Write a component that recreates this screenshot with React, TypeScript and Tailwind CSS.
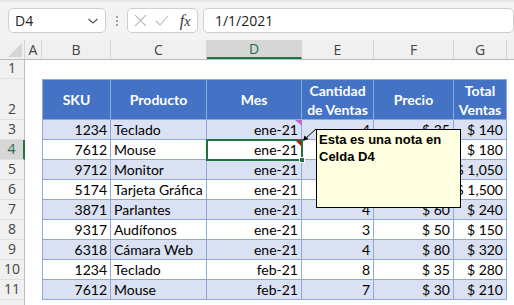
import React from 'react';

const cols = [
  { key: 'A', w: 'w-[17px]' },
  { key: 'B', w: 'w-[69px]' },
  { key: 'C', w: 'w-[96px]' },
  { key: 'D', w: 'w-[95px]' },
  { key: 'E', w: 'w-[72px]' },
  { key: 'F', w: 'w-[80px]' },
  { key: 'G', w: 'w-[53px]' },
];

// E/F of rows 4-6 sit fully under the note, so they're left blank
const data: [string, string, string, string, string, string][] = [
  ['1234', 'Teclado', 'ene-21', '4', '$ 35', '$ 140'],
  ['7612', 'Mouse', 'ene-21', '', '', '$ 180'],
  ['9712', 'Monitor', 'ene-21', '', '', '$ 1,050'],
  ['5174', 'Tarjeta Gráfica', 'ene-21', '', '', '$ 1,500'],
  ['3871', 'Parlantes', 'ene-21', '4', '$ 60', '$ 240'],
  ['9317', 'Audífonos', 'ene-21', '3', '$ 50', '$ 150'],
  ['6318', 'Cámara Web', 'ene-21', '4', '$ 80', '$ 320'],
  ['1234', 'Teclado', 'feb-21', '8', '$ 35', '$ 280'],
  ['7612', 'Mouse', 'feb-21', '7', '$ 30', '$ 210'],
];

const font = { fontFamily: 'Lato, "Liberation Sans", sans-serif' };

function RowHead({ n, h, active }: { n: string; h: string; active?: boolean }) {
  return (
    <div
      className={`${h} w-[25px] shrink-0 flex items-end justify-center pb-[1px] text-[14px] leading-[18px] border-b border-[#e1e1e1] ${
        active ? 'bg-[#d6d6d6] text-[#217346] border-r-2 border-r-[#217346]' : 'bg-[#f0f0f0] text-[#444] border-r border-r-[#bdbdbd]'
      }`}
      style={{ fontFamily: '"Open Sans", sans-serif' }}
    >
      {n}
    </div>
  );
}

export default function App() {
  return (
    <div className="relative w-[514px] h-[305px] overflow-hidden bg-white text-black" style={font}>
      {/* formula bar */}
      <div className="h-[40px] bg-[#f3f3f3] border-t-2 border-[#e6e6e6] flex items-start pt-[6px]">
        <div className="ml-[8px] w-[101px] h-[25px] bg-white border border-[#cfcfcf] rounded-[5px] flex items-center justify-between pl-[6px] pr-[6px] text-[14px] text-[#222]" style={{ fontFamily: '"Open Sans", sans-serif' }}>
          <span>D4</span>
          <svg width="12" height="8" viewBox="0 0 12 8"><path d="M1.5 2 L6 6 L10.5 2" fill="none" stroke="#555" strokeWidth="1.2" /></svg>
        </div>
        <div className="w-[21px] h-[25px] flex flex-col items-center justify-center gap-[2px]">
          <span className="w-[2px] h-[2px] bg-[#888] rounded-full" />
          <span className="w-[2px] h-[2px] bg-[#888] rounded-full" />
          <span className="w-[2px] h-[2px] bg-[#888] rounded-full" />
        </div>
        <div className="w-[73px] h-[25px] bg-white border border-[#cfcfcf] rounded-[5px] flex items-center pl-[6px] gap-[8px]">
          <svg width="13" height="13" viewBox="0 0 13 13"><path d="M1 1 L12 12 M12 1 L1 12" stroke="#bdbdbd" strokeWidth="1.1" /></svg>
          <svg width="14" height="12" viewBox="0 0 14 12"><path d="M1 6 L5 10 L13 1" fill="none" stroke="#bdbdbd" strokeWidth="1.1" /></svg>
          <span className="text-[16px] italic text-[#333] ml-[3px] leading-none" style={{ fontFamily: '"Liberation Serif", serif' }}>
            f<span className="text-[14px]">x</span>
          </span>
        </div>
        <div className="ml-[5px] w-[320px] h-[25px] bg-white border border-[#cfcfcf] rounded-[5px] flex items-center pl-[11px] text-[14px] text-[#222]" style={{ fontFamily: '"Open Sans", sans-serif' }}>
          1/1/2021
        </div>
      </div>

      {/* column headers */}
      <div className="h-[20px] flex bg-[#f0f0f0] border-b border-[#bababa] text-[14px] text-[#444]" style={{ fontFamily: '"Open Sans", sans-serif' }}>
        <div className="w-[25px] shrink-0 border-r border-[#d4d4d4] flex items-end justify-end pr-[2px] pb-[2px]">
          <svg width="14" height="14" viewBox="0 0 14 14"><path d="M14 0 L14 14 L0 14 Z" fill="#d6d6d6" /></svg>
        </div>
        {cols.map(c => (
          <div
            key={c.key}
            className={`${c.w} shrink-0 flex items-center justify-center border-r border-[#d4d4d4] ${
              c.key === 'D' ? 'bg-[#d6d6d6] text-[#217346] border-b-2 border-b-[#217346]' : ''
            }`}
          >
            {c.key}
          </div>
        ))}
        <div className="flex-1" />
      </div>

      {/* row 1 */}
      <div className="flex">
        <RowHead n="1" h="h-[19px]" />
      </div>

      {/* row 2: table header */}
      <div className="flex">
        <RowHead n="2" h="h-[41px]" />
        <div className="w-[17px] shrink-0" />
        {['SKU', 'Producto', 'Mes', 'Cantidad de Ventas', 'Precio', 'Total Ventas'].map((t, i) => (
          <div
            key={t}
            className={`${cols[i + 1].w} shrink-0 h-[41px] bg-[#4472c4] text-white font-bold text-[14px] leading-[19px] text-center flex items-center justify-center whitespace-nowrap border-t border-r border-b border-[#8ea9db] ${
              i === 0 ? 'border-l' : ''
            }`}
          >
            {t === 'Cantidad de Ventas' ? (
              <span>Cantidad<br />de Ventas</span>
            ) : t === 'Total Ventas' ? (
              <span>Total<br />Ventas</span>
            ) : (
              t
            )}
          </div>
        ))}
      </div>

      {/* data rows */}
      {data.map((r, ri) => {
        const band = ri % 2 === 0 ? 'bg-[#d9e1f2]' : 'bg-white';
        const rowNum = ri + 3;
        return (
          <div key={ri} className="flex">
            <RowHead n={String(rowNum)} h="h-[20px]" active={rowNum === 4} />
            <div className="w-[17px] shrink-0" />
            {r.map((v, ci) => (
              <div
                key={ci}
                className={`${cols[ci + 1].w} shrink-0 h-[20px] ${band} border-r border-b border-[#8ea9db] flex items-center whitespace-nowrap text-[14px] leading-none pt-[1px] ${
                  ci === 1 ? 'justify-start pl-[3px]' : 'justify-end pr-[3px]'
                } ${ci === 0 ? 'border-l' : ''}`}
              >
                {v}
              </div>
            ))}
          </div>
        );
      })}
      <div className="flex">
        <RowHead n="" h="h-[20px]" />
      </div>

      {/* selected cell D4 */}
      <div className="absolute left-[206px] top-[139px] w-[97px] h-[22px] border-2 border-[#217346]" />
      <div className="absolute left-[299px] top-[157px] w-[6px] h-[6px] bg-[#217346] border border-white" />

      {/* comment indicator D3 */}
      <svg className="absolute left-[295px] top-[120px]" width="7" height="6" viewBox="0 0 7 6">
        <path d="M0 0 L7 0 L7 6 Z" fill="#b968d6" />
      </svg>
      {/* note indicator D4 */}
      <svg className="absolute left-[296px] top-[141px]" width="5" height="5" viewBox="0 0 5 5">
        <path d="M0 0 L5 0 L5 5 Z" fill="#e00000" />
      </svg>

      {/* note arrow */}
      <svg className="absolute left-[300px] top-[125px]" width="20" height="20" viewBox="0 0 20 20">
        <path d="M16 4 L6 13" stroke="#000" strokeWidth="1" />
        <path d="M3 16 L4.5 10.5 L8.5 14 Z" fill="#000" />
      </svg>

      {/* note */}
      <div
        className="absolute left-[316px] top-[129px] w-[145px] h-[79px] bg-[#ffffe1] border border-black px-[2px] pt-[1px] text-[13px] font-bold leading-[17px] text-black"
        style={{ fontFamily: '"Liberation Sans", sans-serif' }}
      >
        Esta es una nota en
        <br />
        Celda D4
      </div>
    </div>
  );
}
